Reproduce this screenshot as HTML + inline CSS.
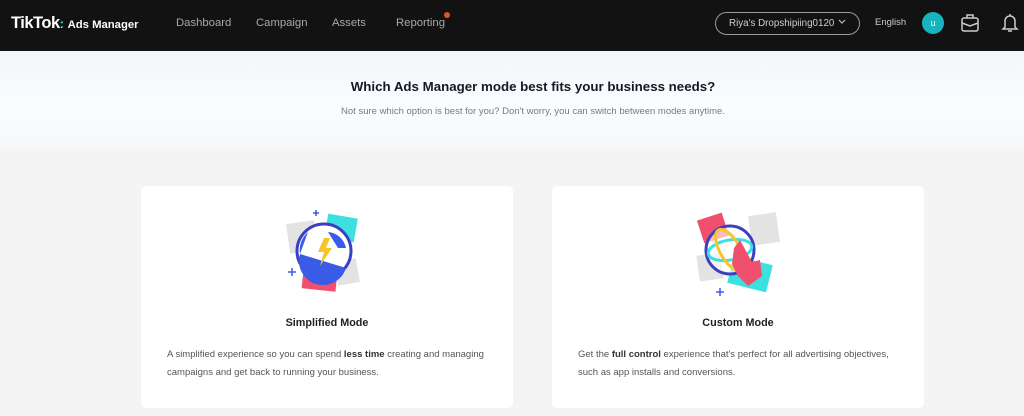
<!DOCTYPE html>
<html><head><meta charset="utf-8"><style>
*{margin:0;padding:0;box-sizing:border-box}
body{width:1024px;height:416px;overflow:hidden;background:#f4f4f5;font-family:"Liberation Sans",sans-serif;position:relative}
.nav{position:absolute;left:0;top:0;width:1024px;height:51px;background:#121212;color:#a8a8a8;font-size:11.3px}
.nav span{position:absolute;top:17px}
.logo{position:absolute;left:11px;top:14px;color:#fff;font-weight:bold;font-size:16.5px;letter-spacing:-0.5px}
.logo small{font-size:11.3px;letter-spacing:0;font-weight:bold}
.hero{position:absolute;left:0;top:51px;width:1024px;height:97px;background:linear-gradient(180deg,#f3f6fa,#fbfcfe 60%,#f6f8fb)}
.hero h1{position:absolute;top:28px;left:42px;width:982px;text-align:center;font-size:13.3px;font-weight:bold;color:#161823}
.hero p{position:absolute;top:55px;left:42px;width:982px;text-align:center;font-size:9.5px;color:#7a7a7a}
.card{position:absolute;top:186px;width:372px;height:222px;background:#fff;border-radius:5px}
.card h2{position:absolute;top:131px;width:100%;text-align:center;font-size:10.8px;font-weight:bold;color:#222}
.card p{position:absolute;left:26px;top:160px;width:330px;font-size:9.5px;line-height:18px;color:#555}
.card b{color:#333}
</style></head><body>
<div class="nav">
<div class="logo">TikTok<span style="position:static;color:#25f4ee;font-size:13px">:</span> <small>Ads Manager</small></div>
<span style="left:176px">Dashboard</span>
<span style="left:256px">Campaign</span>
<span style="left:332px">Assets</span>
<span style="left:396px">Reporting</span>
<div style="position:absolute;left:444px;top:12px;width:6px;height:6px;border-radius:50%;background:#e0502a"></div>
<div style="position:absolute;left:715px;top:12px;width:145px;height:23px;border:1px solid #9a9a9a;border-radius:12px;font-size:9.8px;color:#cfcfcf;padding:5px 0 0 13px;white-space:nowrap">Riya's Dropshipiing0120</div>
<svg style="position:absolute;left:838px;top:19px" width="8" height="6" viewBox="0 0 8 6" fill="none" stroke="#bbb" stroke-width="1.2"><path d="M1 1l3 3 3-3"/></svg>
<span style="left:875px;top:17px;font-size:9.5px;color:#ccc">English</span>
<div style="position:absolute;left:922px;top:12px;width:22px;height:22px;border-radius:50%;background:#17b4bf;color:#fff;font-size:9px;text-align:center;line-height:22px">u</div>
<svg style="position:absolute;left:960px;top:12px" width="20" height="21" viewBox="0 0 20 21" fill="none" stroke="#ccc" stroke-width="1.5"><rect x="2" y="6" width="16" height="13" rx="2"/><path d="M7 6V3h6v3M2 11l8 3 8-3"/></svg>
<svg style="position:absolute;left:1000px;top:12px" width="20" height="22" viewBox="0 0 20 22" fill="none" stroke="#ccc" stroke-width="1.5"><path d="M10 2v2M5 15V9a5 5 0 0 1 10 0v6l2 2H3z M8 19h4"/></svg>
</div>
<div class="hero"><h1>Which Ads Manager mode best fits your business needs?</h1><p>Not sure which option is best for you? Don't worry, you can switch between modes anytime.</p></div>
<div class="card" style="left:141px">
<svg style="position:absolute;left:145px;top:24px" width="90" height="86" viewBox="0 0 90 86">
<rect x="2" y="12" width="28" height="30" fill="#e3e3e3" transform="rotate(-8 16 27)"/>
<rect x="50" y="50" width="22" height="24" fill="#e3e3e3" transform="rotate(-10 61 62)"/>
<rect x="17" y="52" width="34" height="28" fill="#f0506e" transform="rotate(6 34 66)"/>
<rect x="40" y="6" width="30" height="24" fill="#3de0e0" transform="rotate(10 55 18)"/>
<circle cx="38" cy="41" r="27" fill="#fff" stroke="#3b3fc0" stroke-width="3"/>
<path d="M14 44 L60 58 A24 24 0 0 1 14 44Z" fill="#3a5ae8"/><path d="M14 44 A24 24 0 0 1 22 22Z" fill="#3a5ae8"/>
<path d="M42 22 A20 20 0 0 1 60 38 L52 38Z" fill="#3a5ae8"/>
<path d="M38 28 L32 42 L38 42 L34 56 L46 38 L40 38 L44 28Z" fill="#f7c52a"/>
<path d="M30 0v6M27 3h6M2 62h8M6 58v8" stroke="#3a5ae8" stroke-width="1.5"/>
</svg>
<h2>Simplified Mode</h2>
<p>A simplified experience so you can spend <b>less time</b> creating and managing campaigns and get back to running your business.</p>
</div>
<div class="card" style="left:552px">
<svg style="position:absolute;left:142px;top:24px" width="90" height="86" viewBox="0 0 90 86">
<rect x="56" y="4" width="28" height="30" fill="#e3e3e3" transform="rotate(-8 70 19)"/>
<rect x="4" y="44" width="24" height="26" fill="#e3e3e3" transform="rotate(-8 16 57)"/>
<rect x="6" y="6" width="26" height="24" fill="#f0506e" transform="rotate(-18 19 18)"/>
<rect x="36" y="50" width="40" height="28" fill="#3de0e0" transform="rotate(14 56 64)"/>
<circle cx="36" cy="40" r="24" fill="#fff" fill-opacity=".6" stroke="#3b3fc0" stroke-width="3"/>
<ellipse cx="36" cy="40" rx="22" ry="10" fill="none" stroke="#3de0e0" stroke-width="3" transform="rotate(-10 36 40)"/>
<ellipse cx="36" cy="40" rx="10" ry="23" fill="none" stroke="#f7c52a" stroke-width="3" transform="rotate(-30 36 40)"/>
<path d="M40 38 L46 30 L58 52 L66 50 L68 66 L54 76 L44 66 L38 54Z" fill="#f0506e"/>
<path d="M26 78v8M22 82h8" stroke="#3a5ae8" stroke-width="1.5"/>
</svg>
<h2>Custom Mode</h2>
<p>Get the <b>full control</b> experience that's perfect for all advertising objectives, such as app installs and conversions.</p>
</div>
</body></html>
